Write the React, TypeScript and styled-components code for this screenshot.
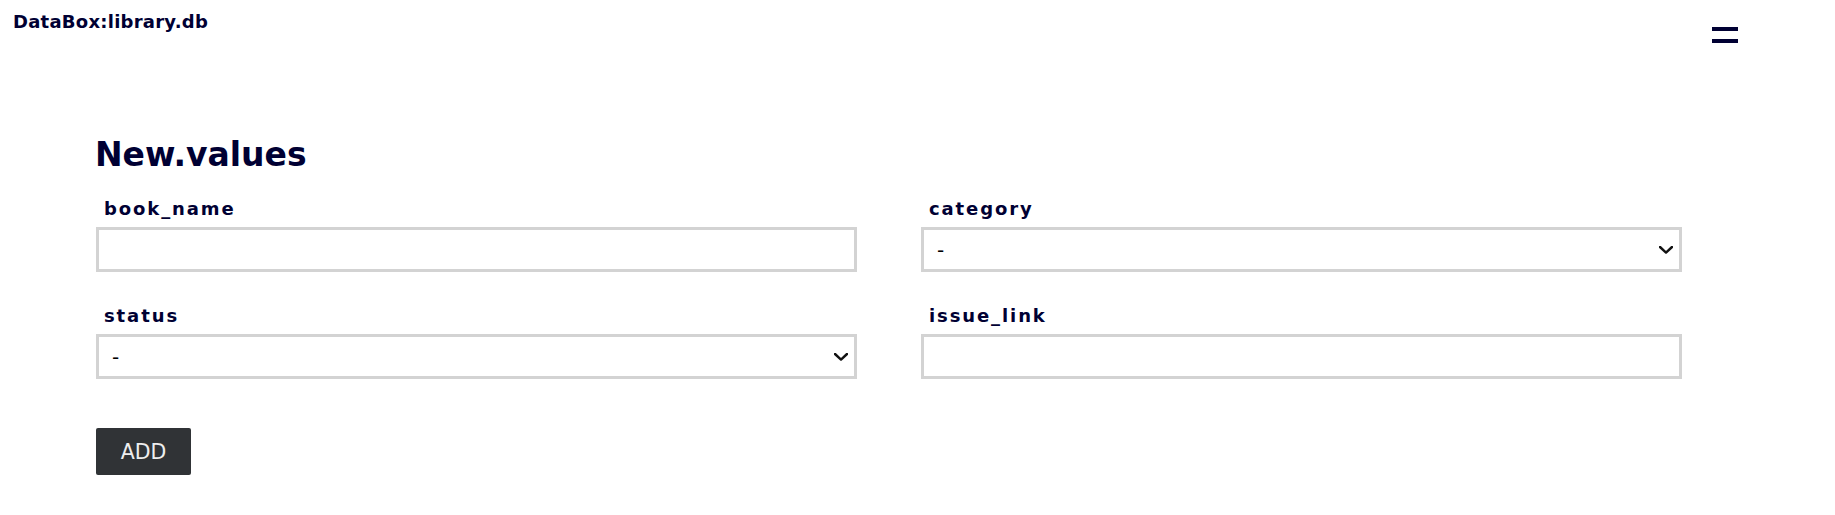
import React from "react";
import styled, { createGlobalStyle } from "styled-components";

const GlobalStyle = createGlobalStyle`
  html, body {
    margin: 0;
    padding: 0;
    background: #ffffff;
  }
  body {
    font-family: "DejaVu Sans", Verdana, sans-serif;
    color: #000033;
  }
  * { box-sizing: border-box; }
`;

const Header = styled.header`
  display: flex;
  justify-content: space-between;
  align-items: flex-start;
  height: 60px;
  padding: 11px 97px 0 13px;
`;

const Brand = styled.div`
  font-family: "DejaVu Sans", Verdana, sans-serif;
  font-weight: bold;
  font-size: 18px;
  letter-spacing: 0.25px;
  color: #000033;
`;

const MenuButton = styled.button`
  display: flex;
  flex-direction: column;
  gap: 8px;
  width: 26px;
  margin-top: 16px;
  padding: 0;
  border: none;
  background: transparent;
  cursor: pointer;
`;

const MenuBar = styled.span`
  display: block;
  width: 26px;
  height: 4px;
  background: #000033;
`;

const Main = styled.main`
  padding: 75px 0 0 96px;
`;

const Title = styled.h1`
  margin: 0 0 24px -1px;
  font-family: "DejaVu Sans", Verdana, sans-serif;
  font-weight: bold;
  font-size: 33px;
  line-height: normal;
  color: #000033;
`;

const FormGrid = styled.div`
  display: grid;
  grid-template-columns: 761px 761px;
  column-gap: 64px;
  row-gap: 33px;
`;

const Field = styled.div`
  display: flex;
  flex-direction: column;
`;

const Label = styled.label`
  display: block;
  height: 21px;
  margin-bottom: 8px;
  padding-left: 8px;
  font-family: "DejaVu Sans", Verdana, sans-serif;
  font-weight: bold;
  font-size: 18px;
  line-height: 21px;
  letter-spacing: 1.9px;
  color: #000033;
`;

const TextInput = styled.input`
  display: block;
  width: 100%;
  height: 45px;
  padding: 0 13px;
  border: 3px solid #d3d3d3;
  border-radius: 0;
  background: #ffffff;
  font-family: "DejaVu Sans", Verdana, sans-serif;
  font-size: 20px;
  color: #000000;
  outline: none;
`;

const SelectWrap = styled.div`
  position: relative;
  width: 100%;
`;

const Select = styled.select`
  display: block;
  width: 100%;
  height: 45px;
  padding: 0 13px;
  border: 3px solid #d3d3d3;
  border-radius: 0;
  background: #ffffff;
  font-family: "DejaVu Sans", Verdana, sans-serif;
  font-size: 20px;
  color: #000000;
  appearance: none;
  -webkit-appearance: none;
  outline: none;
`;

const Chevron = styled.svg`
  position: absolute;
  right: 9px;
  top: 50%;
  width: 14px;
  height: 8px;
  margin-top: -4px;
  pointer-events: none;
`;

const AddButton = styled.button`
  display: flex;
  align-items: center;
  justify-content: center;
  width: 95px;
  height: 47px;
  margin-top: 49px;
  padding: 0;
  border: none;
  border-radius: 2px;
  background: #303336;
  color: #eeeeee;
  font-family: "DejaVu Sans", Verdana, sans-serif;
  font-size: 20.5px;
  cursor: pointer;
`;

const ChevronIcon = () => (
  <Chevron viewBox="0 0 14 8" aria-hidden="true">
    <polyline
      points="1,1 7,6.6 13,1"
      fill="none"
      stroke="#111111"
      strokeWidth="2.4"
      strokeLinecap="round"
      strokeLinejoin="round"
    />
  </Chevron>
);

const SelectField = ({ name }: { name: string }) => (
  <Field>
    <Label htmlFor={name}>{name}</Label>
    <SelectWrap>
      <Select id={name} defaultValue="-">
        <option value="-">-</option>
      </Select>
      <ChevronIcon />
    </SelectWrap>
  </Field>
);

const InputField = ({ name }: { name: string }) => (
  <Field>
    <Label htmlFor={name}>{name}</Label>
    <TextInput id={name} type="text" />
  </Field>
);

export default function App() {
  return (
    <>
      <GlobalStyle />
      <Header>
        <Brand>DataBox:library.db</Brand>
        <MenuButton aria-label="menu">
          <MenuBar />
          <MenuBar />
        </MenuButton>
      </Header>
      <Main>
        <Title>New.values</Title>
        <FormGrid>
          <InputField name="book_name" />
          <SelectField name="category" />
          <SelectField name="status" />
          <InputField name="issue_link" />
        </FormGrid>
        <AddButton type="button">ADD</AddButton>
      </Main>
    </>
  );
}
